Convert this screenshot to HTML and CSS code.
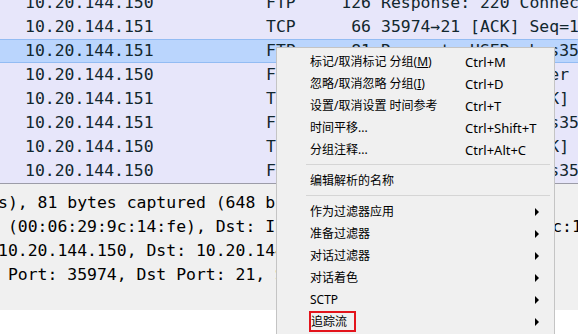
FILE: index.html
```html
<!DOCTYPE html>
<html lang="zh-CN">
<head>
  <meta charset="UTF-8">
  <meta name="viewport" content="width=device-width, initial-scale=1.0">
  <title>Wireshark - 分组列表</title>
  <link rel="stylesheet" href="styles.css">
</head>
<body>
  <div class="screen">
    <div class="packet-list">
      <div class="row">
        <span class="src">10.20.144.150</span><span class="proto">FTP</span><span class="len">126</span><span class="info">Response: 220 Connection established</span>
      </div>
      <div class="row">
        <span class="src">10.20.144.151</span><span class="proto">TCP</span><span class="len">66</span><span class="info">35974→21 [ACK] Seq=1 Ack=21 Win=29312 Len=0</span>
      </div>
      <div class="row selected">
        <span class="src">10.20.144.151</span><span class="proto">FTP</span><span class="len">81</span><span class="info">Request: USER zhus35</span>
      </div>
      <div class="row">
        <span class="src">10.20.144.150</span><span class="proto">FTP</span><span class="len">100</span><span class="info">Response: 331 Enter password</span>
      </div>
      <div class="row">
        <span class="src">10.20.144.151</span><span class="proto">TCP</span><span class="len">66</span><span class="info">35974→21 [FIN, ACK] Seq=16</span>
      </div>
      <div class="row">
        <span class="src">10.20.144.151</span><span class="proto">FTP</span><span class="len">81</span><span class="info">Request: PASS zhus35</span>
      </div>
      <div class="row">
        <span class="src">10.20.144.150</span><span class="proto">TCP</span><span class="len">66</span><span class="info">21→35974 [FIN, ACK] Seq=56</span>
      </div>
      <div class="row">
        <span class="src">10.20.144.150</span><span class="proto">FTP</span><span class="len">95</span><span class="info">Response: 230 zhus35</span>
      </div>
    </div>

    <div class="details">
      <div class="line">s), 81 bytes captured (648 bits) on interface 0</div>
      <div class="line"> (00:06:29:9c:14:fe), Dst: IntelCor_3c:14:a2 (00:1b:21:3c:14:a2)</div>
      <div class="line">10.20.144.150, Dst: 10.20.144.151</div>
      <div class="line"> Port: 35974, Dst Port: 21, Seq: 1, Ack: 21, Len: 15</div>
    </div>

    <div class="context-menu">
      <div class="item"><span class="label">标记/取消标记 分组(<u>M</u>)</span><span class="shortcut">Ctrl+M</span></div>
      <div class="item"><span class="label">忽略/取消忽略 分组(<u>I</u>)</span><span class="shortcut">Ctrl+D</span></div>
      <div class="item"><span class="label">设置/取消设置 时间参考</span><span class="shortcut">Ctrl+T</span></div>
      <div class="item"><span class="label">时间平移...</span><span class="shortcut">Ctrl+Shift+T</span></div>
      <div class="item"><span class="label">分组注释...</span><span class="shortcut">Ctrl+Alt+C</span></div>
      <div class="sep"></div>
      <div class="item"><span class="label">编辑解析的名称</span></div>
      <div class="sep"></div>
      <div class="item"><span class="label">作为过滤器应用</span><span class="arrow"></span></div>
      <div class="item"><span class="label">准备过滤器</span><span class="arrow"></span></div>
      <div class="item"><span class="label">对话过滤器</span><span class="arrow"></span></div>
      <div class="item"><span class="label">对话着色</span><span class="arrow"></span></div>
      <div class="item"><span class="label">SCTP</span><span class="arrow"></span></div>
      <div class="item"><span class="label"><span class="traced">追踪流</span></span><span class="arrow"></span></div>
    </div>
  </div>
</body>
</html>
```

FILE: styles.css
```css
body {
  margin: 0;
  background: #fff;
  overflow: hidden;
}
.screen {
  position: relative;
  width: 578px;
  height: 334px;
  overflow: hidden;
}
.packet-list {
  margin-top: -9px;
  background: #e7e6fa;
  border-bottom: 1px solid #9c9ca8;
  font-family: "DejaVu Sans Mono", monospace;
  font-size: 16.45px;
  color: #12272e;
}
.row {
  display: grid;
  grid-template-columns: 241px 55px 50px minmax(0, 1fr);
  height: 24px;
  line-height: 24px;
  padding-left: 25px;
  box-sizing: border-box;
  white-space: nowrap;
  overflow: hidden;
}
.row.selected {
  background: #bad5fd;
  border-top: 1px solid #93bcf3;
  border-bottom: 1px solid #93bcf3;
  line-height: 22px;
}
.len {
  text-align: right;
}
.info {
  padding-left: 10px;
  overflow: hidden;
}
.details {
  height: 126px;
  box-sizing: border-box;
  padding-top: 7px;
  background: #f0f0f0;
  font-family: "DejaVu Sans Mono", monospace;
  font-size: 16.45px;
  color: #000;
}
.line {
  height: 24px;
  line-height: 24px;
  margin-left: -2px;
  white-space: pre;
}
.context-menu {
  position: absolute;
  left: 276px;
  top: 47px;
  width: 279px;
  height: 300px;
  box-sizing: border-box;
  padding: 3px 0;
  background: #f0f0f0;
  border: 1px solid #c4c4c4;
  font-family: "Noto Sans", "Noto Sans CJK SC", sans-serif;
  font-size: 12px;
  color: #000;
}
.item {
  display: flex;
  align-items: center;
  height: 22px;
  line-height: 22px;
  padding-left: 33px;
  white-space: nowrap;
}
.label {
  width: 155px;
}
.shortcut {
  font-size: 13px;
}
.arrow {
  margin-left: auto;
  margin-right: 15px;
  width: 0;
  height: 0;
  border-left: 4px solid #000;
  border-top: 4px solid transparent;
  border-bottom: 4px solid transparent;
}
.sep {
  height: 1px;
  background: #d5d5d5;
  margin: 3px 4px 5px 29px;
}
.traced {
  display: inline-block;
  margin-left: -1px;
  padding: 0 7px 0 0;
  height: 17px;
  line-height: 17px;
  border: 2px solid #e3141c;
}
```
